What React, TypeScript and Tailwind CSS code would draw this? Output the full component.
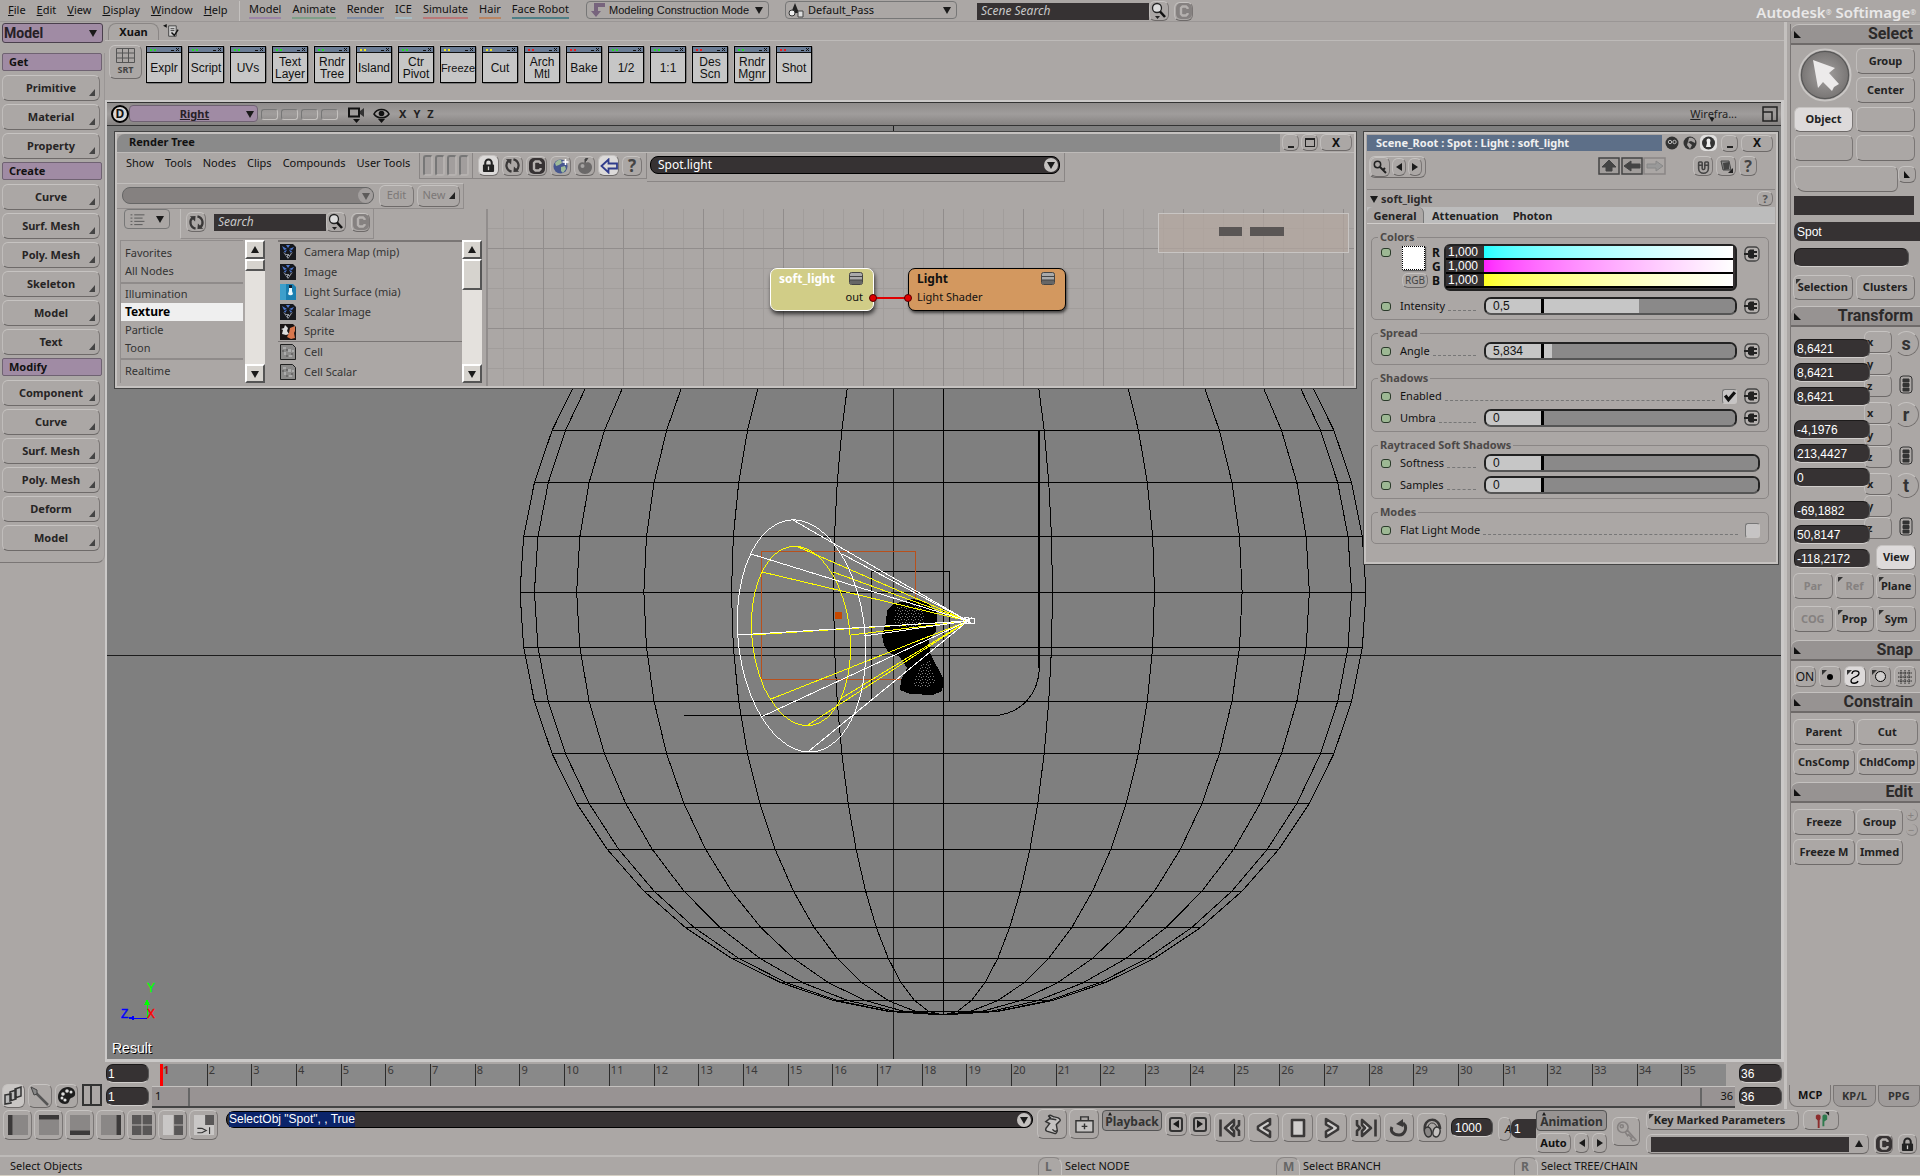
import { useState } from 'react';
import type { ReactNode } from 'react';
import { Magnet } from 'lucide-react';

const BEVEL = 'border border-t-[#c6c3c1] border-l-[#c0bdbb] border-r-[#7a7675] border-b-[#6e6a69] rounded-md';
const FIELD = 'bg-[#363233] text-white font-["Liberation_Sans",sans-serif] text-[12px] leading-[16px] outline-none';
const PILL = 'rounded-[7px] border border-t-[#1c1a1a] border-l-[#1c1a1a] border-r-[#555] border-b-[#d0cdcb]';

const mainMenu = ['File', 'Edit', 'View', 'Display', 'Window', 'Help'];

const moduleMenu = [
  { label: 'Model', line: 'border-[#9c86a6]' },
  { label: 'Animate', line: 'border-[#7f9f88]' },
  { label: 'Render', line: 'border-[#8490a6]' },
  { label: 'ICE', line: 'border-[#a8bcc4]' },
  { label: 'Simulate', line: 'border-[#b97878]' },
  { label: 'Hair', line: 'border-[#b98563]' },
  { label: 'Face Robot', line: 'border-[#4f7f86]' },
];

const leftSections = [
  { title: 'Get', items: ['Primitive', 'Material', 'Property'] },
  { title: 'Create', items: ['Curve', 'Surf. Mesh', 'Poly. Mesh', 'Skeleton', 'Model', 'Text'] },
  { title: 'Modify', items: ['Component', 'Curve', 'Surf. Mesh', 'Poly. Mesh', 'Deform', 'Model'] },
];

const shelf = [
  { label: 'Explr', led: '#1fe01f' },
  { label: 'Script', led: '#1fe01f' },
  { label: 'UVs', led: '#1fe01f' },
  { label: 'Text Layer', led: '#1fe01f' },
  { label: 'Rndr Tree', led: '#1fe01f' },
  { label: 'Island', led: '#f2e61c' },
  { label: 'Ctr Pivot', led: '#1fe01f' },
  { label: 'Freeze', led: '#f2e61c' },
  { label: 'Cut', led: '#f2e61c' },
  { label: 'Arch Mtl', led: '#f01c1c' },
  { label: 'Bake', led: '#f01c1c' },
  { label: '1/2', led: '#1fe01f' },
  { label: '1:1', led: '#1fe01f' },
  { label: 'Des Scn', led: '#f01c1c' },
  { label: 'Rndr Mgnr', led: '#1fe01f' },
  { label: 'Shot', led: '#f01c1c' },
];

const categories = [['Favorites', 'All Nodes'], ['Illumination', 'Texture', 'Particle', 'Toon'], ['Realtime']];

const nodeList = [
  { name: 'Camera Map (mip)', kind: 'map' },
  { name: 'Image', kind: 'map' },
  { name: 'Light Surface (mia)', kind: 'light' },
  { name: 'Scalar Image', kind: 'map' },
  { name: 'Sprite', kind: 'sprite' },
  { name: 'Cell', kind: 'cell' },
  { name: 'Cell Scalar', kind: 'cell' },
];

/* ---------- small shared pieces ---------- */

function Triangle({ dir = 'down', className = '' }: { dir?: 'down' | 'up' | 'left' | 'right'; className?: string }) {
  const d = { down: 'M0 1h8L4 8z', up: 'M0 7h8L4 0z', left: 'M7 0v8L1 4z', right: 'M1 0v8l6-4z' }[dir];
  return (
    <svg viewBox="0 0 8 8" className={`h-2 w-2 shrink-0 fill-[#1a1a1a] ${className}`}>
      <path d={d} />
    </svg>
  );
}

function IconButton({ label, className = '', children }: { label: string; className?: string; children: ReactNode }) {
  return (
    <button aria-label={label} className={`flex shrink-0 items-center justify-center ${BEVEL} ${className}`}>
      {children}
    </button>
  );
}

function CBadge({ dim = false }: { dim?: boolean }) {
  return (
    <svg viewBox="0 0 16 16" className="h-[16px] w-[16px]">
      <rect x="0" y="0" width="16" height="16" rx="5" fill={dim ? '#858180' : '#363233'} />
      <path d="M11.500 6V5l-1.500-1.500H6.500L5 5v6l1.500 1.500H10l1.500-1.500v-1" fill="none" stroke="#b5b1af" strokeWidth="2.400" />
    </svg>
  );
}

function Padlock() {
  return (
    <svg viewBox="0 0 14 16" className="h-[15px] w-[13px]">
      <path d="M3.500 8V5a3.500 3.500 0 017 0v3" fill="none" stroke="#222" strokeWidth="2.200" />
      <rect x="1" y="7" width="12" height="8" rx="1" fill="#222" />
      <path d="M6.300 9h1.400v4H6.300z" fill="#d0cdcb" />
    </svg>
  );
}

function Refresh() {
  return (
    <svg viewBox="0 0 18 18" className="h-[17px] w-[17px]">
      <path d="M8 15.500C2 14 1 7 5 4M10 2.500c6 1.500 7 8.500 3 11.500" fill="none" stroke="#3a3838" strokeWidth="2.400" />
      <path d="M2 2.500l6-.5-.5 6zM16 15.500l-6 .5.500-6z" fill="#3a3838" />
    </svg>
  );
}

function Magnifier() {
  return (
    <svg viewBox="0 0 18 18" className="h-[18px] w-[18px]">
      <circle cx="7" cy="6" r="4.500" fill="#dcdcdc" stroke="#222" strokeWidth="1.300" />
      <path d="M10 9.500l5 5.500" stroke="#111" strokeWidth="2.600" />
      <path d="M5 14h5l-2.500 3z" fill="#222" />
    </svg>
  );
}

function Scrollbar({ thumb }: { thumb: string }) {
  const key = 'flex h-[19px] w-full items-center justify-center border-2 border-t-white border-l-white border-r-[#555] border-b-[#555] bg-[#d6d3ce]';
  return (
    <div className="flex w-[20px] shrink-0 flex-col bg-[#e4e1dd]">
      <button aria-label="Scroll up" className={key}>
        <Triangle dir="up" />
      </button>
      <div className={`w-full border-2 border-t-white border-l-white border-r-[#555] border-b-[#555] bg-[#d6d3ce] ${thumb}`} />
      <div className="flex-1" />
      <button aria-label="Scroll down" className={key}>
        <Triangle />
      </button>
    </div>
  );
}

function SearchBox({ placeholder, width }: { placeholder: string; width: string }) {
  return (
    <div className="flex items-center">
      <input
        type="text"
        aria-label={placeholder}
        placeholder={placeholder}
        className={`h-[17px] bg-[#363233] px-1 text-[12px] text-white italic outline-none placeholder:text-[#c8c8c8] ${width}`}
      />
      <IconButton label="Search" className="h-[20px] w-[20px]">
        <Magnifier />
      </IconButton>
      <IconButton label="Clear" className="ml-[5px] h-[19px] w-[19px]">
        <CBadge dim />
      </IconButton>
    </div>
  );
}

/* ---------- top ---------- */

function MenuBar() {
  return (
    <header className="flex h-[22px] items-start border-b border-[#9a9695] pt-px">
      <nav className="flex w-[239px] gap-[11px] pl-[8px]">
        {mainMenu.map((m) => (
          <button key={m} className="leading-[18px]">
            <u>{m[0]}</u>
            {m.slice(1)}
          </button>
        ))}
      </nav>
      <nav className="flex h-full w-[339px] gap-[11px] border-l border-[#c4c1bf] pl-[9px]">
        {moduleMenu.map((m) => (
          <button key={m.label} className={`h-[18px] border-b-2 leading-[16px] whitespace-nowrap ${m.line}`}>
            {m.label}
          </button>
        ))}
      </nav>
      <div className="relative ml-[8px]">
        <svg viewBox="0 0 14 16" className="pointer-events-none absolute top-px left-[5px] h-[16px] w-[14px]">
          <path d="M14 1H3v8H0l5 6 5-6H7V5h7z" fill="#77647d" />
        </svg>
        <select aria-label="Construction mode" className='h-[18px] w-[183px] appearance-none rounded-sm border border-[#777] pl-[22px] font-["Liberation_Sans",sans-serif]'>
          <option>Modeling Construction Mode</option>
        </select>
        <Triangle className="pointer-events-none absolute top-[5px] right-[6px]" />
      </div>
      <div className="relative ml-[16px]">
        <svg viewBox="0 0 16 16" className="pointer-events-none absolute top-px left-[3px] h-[16px] w-[16px]">
          <path d="M7 1l4 10H3z" fill="#222" />
          <circle cx="4" cy="11" r="3" fill="#eee" stroke="#333" />
          <path d="M10 9h5v6h-5z" fill="#ddd" stroke="#444" />
        </svg>
        <select aria-label="Current pass" className="h-[18px] w-[172px] appearance-none rounded-sm border border-[#777] pl-[22px]">
          <option>Default_Pass</option>
        </select>
        <Triangle className="pointer-events-none absolute top-[5px] right-[6px]" />
      </div>
      <div className="ml-[20px]">
        <SearchBox placeholder="Scene Search" width="w-[172px]" />
      </div>
      <div className="flex-1" />
      <h1 className="pr-[4px] text-[15px] leading-[22px] font-semibold whitespace-nowrap text-[#e9e8e8]">
        Autodesk<sup className="text-[7px]">®</sup> Softimage<sup className="text-[7px]">®</sup>
      </h1>
    </header>
  );
}

function LeftBar() {
  return (
    <aside className="flex w-[105px] shrink-0 flex-col">
      <div className="relative mx-[2px] mt-px">
        <select
          aria-label="Toolbar"
          className='h-[20px] w-full appearance-none rounded-[3px] border border-[#4a3f4d] bg-[#a08ba4] pl-px font-["Roboto",sans-serif] text-[14px] leading-[16px] font-bold text-[#262026]'
        >
          <option>Model</option>
        </select>
        <Triangle className="pointer-events-none absolute top-[6px] right-[6px]" />
      </div>
      <div className="mt-[10px] rounded-br-lg border-r border-b border-r-[#9a9695] border-b-[#7a7675] pb-[8px]">
        {leftSections.map((s) => (
          <section key={s.title}>
            <h2 className="mx-[2px] h-[18px] rounded-[2px] border border-[#6f6272] bg-[#a08ba4] px-[6px] leading-[16px] font-bold">{s.title}</h2>
            <div className="flex flex-col gap-[3px] pt-[4px] pb-[3px] pl-[2px]">
              {s.items.map((item) => (
                <button key={item} className={`relative h-[26px] w-[98px] font-bold text-[#262424] ${BEVEL}`}>
                  {item}
                  <svg viewBox="0 0 6 7" className="absolute right-[4px] bottom-[4px] h-[7px] w-[6px] fill-[#444]">
                    <path d="M6 0v7H0z" />
                  </svg>
                </button>
              ))}
            </div>
          </section>
        ))}
      </div>
      <div className="flex-1" />
      <div className="mb-px flex gap-[3px] pl-[2px]">
        <IconButton label="Layouts" className="h-[24px] w-[23px] bg-[#c9c6c4]">
          <svg viewBox="0 0 20 20" className="h-5 w-5 fill-[#bbb] stroke-[#333]" strokeWidth="1.500">
            <path d="M11 3l6-2v9l-6 2zM6 6l6-2v9l-6 2zM1 9l6-1v9l-6 1z" />
          </svg>
        </IconButton>
        <IconButton label="Brush" className="h-[24px] w-[24px]">
          <svg viewBox="0 0 20 20" className="h-5 w-5">
            <path d="M6 7l12 12" stroke="#555" strokeWidth="2.500" />
            <path d="M1 1l6 3v4l-3 1z" fill="#888" stroke="#444" />
          </svg>
        </IconButton>
        <IconButton label="Palette" className="h-[24px] w-[23px]">
          <svg viewBox="0 0 20 20" className="h-5 w-5">
            <path d="M11 1c5 0 8 4 7 8-1 3-4 2-5 4s-1 5-5 5c-4 0-7-3-7-7C1 5 6 1 11 1z" fill="#1d1d1d" />
            <g fill="#ddd">
              <circle cx="10" cy="5" r="1.800" />
              <circle cx="14" cy="6" r="1.500" />
              <circle cx="6" cy="8" r="1.800" />
              <circle cx="5" cy="12" r="1.500" />
              <circle cx="8" cy="14" r="1.600" />
            </g>
          </svg>
        </IconButton>
        <button aria-label="Split" className="ml-px flex h-[22px] w-[20px] border-2 border-[#333]">
          <span className="h-full w-1/2 border-r-2 border-[#333]" />
        </button>
      </div>
    </aside>
  );
}

function Shelf() {
  return (
    <div>
      <div className="flex h-[19px] items-end border-b border-[#bdbab8] pl-[3px]">
        <button className="h-[17px] w-[51px] rounded-t-lg border border-b-0 border-[#8a8685] leading-[16px] font-bold">Xuan</button>
        <svg viewBox="0 0 18 18" className="ml-[4px] h-[17px] w-[17px]">
          <path d="M0 3l4-2v4z" fill="#111" />
          <path d="M6 3h8v11H6zM8 6h4M8 8h4" fill="#ccc" stroke="#444" />
          <path d="M9 10l3 3 4-6" fill="none" stroke="#111" strokeWidth="1.500" />
        </svg>
      </div>
      <div className="flex h-[59px] items-start pt-[4px] pl-[4px]">
        <IconButton label="SRT" className="mr-[3px] h-[34px] w-[33px] flex-col text-[#444]">
          <svg viewBox="0 0 19 15" className="h-[15px] w-[19px] fill-none stroke-[#555]">
            <path d="M.5.5h18v14H.5zM6.500.5v14M12.500.5v14M.5 5h18M.5 10h18" />
          </svg>
          <span className="text-[9px] leading-[13px] font-bold">SRT</span>
        </IconButton>
        <div className="flex gap-[4px]">
          {shelf.map((s) => (
            <button key={s.label} className="flex h-[39px] w-[38px] flex-col rounded-[4px] border border-t-[#c8c5c3] border-l-[#b5b1af] border-r-[#777] border-b-[#777]">
              <span className="flex h-[37px] w-[36px] flex-col border border-black bg-[#c6c6c6]">
                <svg viewBox="0 0 34 6" className="h-[6px] w-full shrink-0" shapeRendering="crispEdges">
                  <path d="M0 0h34v5H0z" fill="#6b7d96" />
                  <path d="M0 5h34v1H0z" fill="#111" />
                  <path d="M3 2h2v2H3zM7 2h2v2H7z" fill={s.led} />
                  <path d="M24 3.500h3M29 1l3 3M32 1l-3 3" stroke="#111" />
                </svg>
                <span
                  className={`flex flex-1 items-center justify-center text-center font-["Liberation_Sans",sans-serif] leading-[12px] ${s.label === 'Freeze' ? 'text-[11px]' : 'text-[12px]'}`}
                >
                  {s.label}
                </span>
              </span>
            </button>
          ))}
        </div>
      </div>
    </div>
  );
}

/* ---------- viewport drawing ---------- */

const CX = 943;
const CY = 592;
const R = 423;
const rad = (deg: number) => (deg * Math.PI) / 180;
const latitudes = Array.from({ length: 25 }, (_, i) => -90 + i * 7.5);
const longitudes = Array.from({ length: 13 }, (_, i) => -90 + i * 15);

const outerSpokes = [[793, 520], [751, 554], [737, 635], [761, 717], [809, 751], [852, 716], [864, 636], [842, 554]];
const innerSpokes = [[796, 546], [762, 572], [751, 635], [771, 699], [808, 725], [840, 699], [851, 635], [833, 572]];

function Wireframe() {
  const bands = latitudes.map((a) => {
    const y = CY + R * Math.sin(rad(a));
    const w = R * Math.cos(rad(a));
    return `M${CX - w} ${y}H${CX + w}`;
  });
  const meridians = longitudes.map(
    (l) =>
      'M' +
      latitudes.map((a) => `${CX + R * Math.cos(rad(a)) * Math.sin(rad(l))} ${CY + R * Math.sin(rad(a))}`).join('L'),
  );
  return (
    <svg viewBox="107 126 1674 933" className="absolute inset-0 h-full w-full" shapeRendering="crispEdges" fill="none">
      <defs>
        <pattern id="mesh" width="7" height="6" patternUnits="userSpaceOnUse">
          <path d="M1 1h1v1h-1zM3 2h1v1h-1zM5 1h1v1h-1zM2 4h1v1h-1zM6 4h1v1h-1zM4 5h1v1h-1z" fill="#7f7f7f" />
        </pattern>
      </defs>
      <path d="M893.500 126V1059M107 655.500H1781" stroke="#1c1c1c" />
      <path d={bands.join('') + meridians.join('')} stroke="#000" />
      <path d="M871.500 702V571.500H949.500V702" stroke="#000" />
      <path d="M761.500 551.500h154v128h-154z" stroke="#b8501c" />
      <path d="M1039 431V668" stroke="#000" strokeWidth="2" />
      <path d="M1039.500 668C1038 695 1022 712 997 715.500H684" stroke="#000" />
      <path
        d="M893 604l20-5 15 4 9 10-1 18-7 9 1 13 14 27-2 11-9 4-23-1-10-4 1-10 6-12-8-12-10-3-5-8-2-10 4-12 1-13z"
        fill="#000"
      />
      <path d="M895 608l18-4 13 5-2 14-14 5-16-2zM922 662l8-1 6 22-14 6-10-3z" fill="url(#mesh)" />
      <path d="M835 612h7v7h-7z" fill="#c84800" />
      <g stroke="#ff0">
        <ellipse cx="801" cy="636" rx="49" ry="90" transform="rotate(-5.700 801 636)" />
        <path d={innerSpokes.map(([x, y]) => `M${x} ${y}L968 621`).join('')} />
      </g>
      <g stroke="#fff">
        <ellipse cx="801.500" cy="636" rx="63.500" ry="116.500" transform="rotate(-5.700 801 636)" />
        <path d={outerSpokes.map(([x, y]) => `M${x} ${y}L968 621`).join('')} />
        <circle cx="967" cy="620.500" r="3" />
        <path d="M964 617l8 7M964 624l8-7M968 618h6v5h-6z" />
      </g>
      <path d="M147.500 1018V1001" stroke="#0f0" />
      <path d="M144 1005h6l-3-6z" fill="#0f0" />
      <path d="M147 1018.500H130" stroke="#00f" />
      <path d="M134 1015.500v5l-6-2.500z" fill="#00f" />
      <g className='font-["Liberation_Sans",sans-serif] text-[12px]' strokeWidth=".4">
        <text x="147" y="992" fill="#0f0" stroke="#0f0">Y</text>
        <text x="147" y="1018" fill="#f00" stroke="#f00">X</text>
        <text x="121" y="1018" fill="#00f" stroke="#00f">Z</text>
      </g>
    </svg>
  );
}

/* ---------- render tree ---------- */

function WindowKeys({ maximize = false }: { maximize?: boolean }) {
  return (
    <>
      <IconButton label="Minimize" className="h-[17px] w-[17px]">
        <span className="mt-[8px] h-[2px] w-[6px] bg-[#222]" />
      </IconButton>
      {maximize && (
        <IconButton label="Maximize" className="h-[17px] w-[17px]">
          <span className="h-[9px] w-[10px] border border-t-2 border-[#222]" />
        </IconButton>
      )}
      <button aria-label="Close" className={`h-[17px] w-[32px] text-[12px] leading-[14px] font-bold ${BEVEL}`}>
        X
      </button>
    </>
  );
}

function NodeIcon({ kind }: { kind: string }) {
  return (
    <svg viewBox="0 0 16 16" className="h-[16px] w-[16px] shrink-0">
      {kind === 'map' && (
        <>
          <path d="M0 0h13l3 3v13H0z" fill="#16181d" />
          <path d="M2 2l5 3-3 1zM14 3l-5 2 3 1zM6 1l2 3 2-3zM4 7l3-1-2 3zM12 7L9 6l2 3z" fill="#4f78cf" />
          <path d="M3 8l5 7 5-7-3 2H6z" fill="#8d929b" />
          <path d="M6 11h1v1H6zM8 12h1v1H8zM9 10h1v1H9z" fill="#16181d" />
        </>
      )}
      {kind === 'light' && (
        <>
          <path d="M0 0h13l3 3v13H0z" fill="#1b7fb0" />
          <path d="M0 0h6v16H0z" fill="#3d9fcb" />
          <path d="M9 1h3v3H9z" fill="#123" />
          <path d="M9 4h3v3l1 3a3 3 0 01-5 0l1-3z" fill="#eafaff" />
        </>
      )}
      {kind === 'sprite' && (
        <>
          <path d="M0 0h13l3 3v13H0z" fill="#1a1515" />
          <path d="M5 1l3 3-1 3 2 3-3 1-4-1 1-4-2-1 3-1z" fill="#ddd" />
          <path d="M10 4l5-2v5l-1 2 1 5-4 1-4-2 2-4z" fill="#d9774d" />
        </>
      )}
      {kind === 'cell' && (
        <>
          <path d="M.5.5h12l3 3v12H.5z" fill="#8b8a89" stroke="#222" />
          <path d="M3 3h3v2H3zM8 5h3v3H8zM4 8h2v3H4zM9 11h3v2H9zM12 6h2v2h-2z" fill="#aaa" />
          <path d="M6 5h2v2H6zM6 11h2v2H6zM2 6h2v2H2zM11 9h2v2h-2z" fill="#6c6b6b" />
        </>
      )}
    </svg>
  );
}

function NodeGlyph() {
  return (
    <svg viewBox="0 0 14 13" className="h-[13px] w-[14px]">
      <rect x=".5" y=".5" width="13" height="12" rx="2" fill="#a9a9a9" stroke="#444" />
      <path d="M1 8h12v3l-1 1H2l-1-1z" fill="#666" />
      <path d="M1 4.500h12M1 8h12" stroke="#444" />
    </svg>
  );
}

function Graph() {
  return (
    <div className="relative min-w-0 flex-1 overflow-hidden">
      <svg className="absolute inset-0 h-full w-full">
        <defs>
          <pattern id="minor" x="15" y="19" width="20" height="20" patternUnits="userSpaceOnUse">
            <path d="M.5 0v20M0 .5h20" stroke="#a19d9b" />
          </pattern>
          <pattern id="major" x="55" y="39" width="80" height="80" patternUnits="userSpaceOnUse">
            <path d="M.5 0v80M0 .5h80" stroke="#918d8c" />
          </pattern>
        </defs>
        <rect width="100%" height="100%" fill="url(#minor)" />
        <rect width="100%" height="100%" fill="url(#major)" />
      </svg>
      <div className="absolute top-[59px] left-[282px] h-[43px] w-[104px] rounded-[7px] border border-white bg-[#d1cd87] pt-[3px] shadow-[1px_3px_4px_rgba(0,0,0,0.7)]">
        <div className="flex items-start justify-between pr-[10px] pl-[8px] text-[12px] leading-[14px] font-bold text-white">
          soft_light
          <NodeGlyph />
        </div>
        <div className="pr-[10px] text-right leading-[22px]">out</div>
      </div>
      <div className="absolute top-[59px] left-[420px] h-[43px] w-[158px] rounded-[7px] border border-black bg-[#d3985f] pt-[3px] shadow-[1px_2px_3px_rgba(0,0,0,0.6)]">
        <div className="flex items-start justify-between pr-[10px] pl-[8px] text-[12px] leading-[14px] font-bold">
          Light
          <NodeGlyph />
        </div>
        <div className="pl-[8px] leading-[22px]">Light Shader</div>
      </div>
      <svg viewBox="0 0 44 10" className="absolute top-[84px] left-[380px] h-[10px] w-[44px]">
        <path d="M5 5h35" stroke="#e00000" strokeWidth="2" />
        <circle cx="5" cy="5" r="3.500" fill="#e00000" stroke="#500" />
        <circle cx="40" cy="5" r="3.500" fill="#e00000" stroke="#500" />
      </svg>
      <div className="absolute top-[4px] right-[5px] flex h-[40px] w-[191px] items-center gap-[8px] border border-[#c8c5c3] bg-[#b3a69f]/70 pb-[3px] pl-[60px]">
        <span className="h-[9px] w-[23px] bg-[#5a5655]" />
        <span className="h-[9px] w-[34px] bg-[#5a5655]" />
      </div>
    </div>
  );
}

function RenderTree() {
  const [category, setCategory] = useState('Texture');
  return (
    <section className="absolute top-[5px] left-[7px] flex h-[258px] w-[1243px] flex-col border border-[#444] bg-[#aba7a5] p-[2px] shadow-[inset_0_0_0_2px_#c5c2c0]">
      <div className="flex h-[18px] items-start gap-[2px] pr-[2px]">
        <h2 className="h-full flex-1 rounded-tl-lg bg-[#8a8a8a] pl-[12px] leading-[15px] font-bold">Render Tree</h2>
        <WindowKeys maximize />
      </div>
      <div className="flex h-[31px] items-start border-t border-[#bdbab8]">
        <nav className="flex h-[26px] w-[302px] items-start gap-[11px] pt-px pl-[9px] leading-[18px]">
          {['Show', 'Tools', 'Nodes', 'Clips', 'Compounds', 'User Tools'].map((m) => (
            <button key={m} className="whitespace-nowrap">{m}</button>
          ))}
        </nav>
        <div className="flex h-[26px] w-[54px] items-center gap-[2px] border-r border-b border-l border-[#8a8685] pl-[3px]">
          {[0, 1, 2, 3].map((i) => (
            <span key={i} className="h-[21px] w-[10px] rounded-[3px] border-2 border-t-[#777] border-l-[#777] border-r-[#b5b1af] border-b-[#b5b1af] bg-[#a29e9d]" />
          ))}
        </div>
        <div className="flex h-[26px] w-[174px] items-center gap-[3px] border-r border-b border-[#8a8685] pl-[5px]">
          <IconButton label="Lock" className="h-[21px] w-[21px] bg-[#dcdad9]">
            <Padlock />
          </IconButton>
          <IconButton label="Refresh" className="h-[20px] w-[21px]">
            <Refresh />
          </IconButton>
          <IconButton label="Clear" className="h-[20px] w-[21px]">
            <CBadge />
          </IconButton>
          <IconButton label="World" className="h-[20px] w-[21px]">
            <svg viewBox="0 0 16 16" className="h-[16px] w-[16px]">
              <circle cx="7.500" cy="8.500" r="7" fill="#46578f" />
              <path d="M2 5c2-3 5-4 6-3l1 3-3 2-3 1zM8 9l4-1 1 3-3 4-2-2z" fill="#9dba97" />
              <path d="M12.500 1v6M9.500 4h6" stroke="#fff" strokeWidth="1.500" />
            </svg>
          </IconButton>
          <IconButton label="Apple" className="h-[20px] w-[21px]">
            <svg viewBox="0 0 16 16" className="h-[16px] w-[16px]">
              <path d="M8 5c3-2 7 0 7 4s-3 7-7 7-7-3-7-7 4-6 7-4z" fill="#6b6969" />
              <circle cx="5.500" cy="8" r="2" fill="#a5a3a2" />
              <path d="M8 5V1l3-1-2 3" stroke="#444" fill="#444" />
            </svg>
          </IconButton>
          <IconButton label="Back" className="h-[21px] w-[21px] bg-[#dcdad9]">
            <svg viewBox="0 0 18 16" className="h-[16px] w-[18px] fill-[#dcdad9] stroke-[#303c8c]" strokeWidth="1.800">
              <path d="M1.500 8l7-6.500v4h8.500v5H8.500v4z" />
            </svg>
          </IconButton>
          <IconButton label="Help" className="h-[20px] w-[20px] text-[17px] leading-none font-bold text-[#444]">
            ?
          </IconButton>
        </div>
        <div className="relative h-[29px] w-[418px] border-r border-b border-[#8a8685] pt-[3px] pl-[3px]">
          <input type="text" aria-label="Node" defaultValue="Spot.light" className="h-[18px] w-[410px] rounded-[8px] border border-black bg-[#363233] px-[7px] text-[12px] text-white outline-none" />
          <button aria-label="Recent nodes" className="absolute top-[5px] right-[6px] flex h-[14px] w-[14px] items-center justify-center rounded-full bg-[#c4c1bf]">
            <Triangle />
          </button>
        </div>
      </div>
      <div className="flex h-[26px] items-start">
        <div className="flex h-[26px] w-[347px] items-center border border-l-0 border-[#918d8c] border-t-[#c0bdbb] pb-px pl-[5px] text-[#7c7877]">
          <div className="flex h-[17px] w-[252px] justify-end rounded-[8px] border border-[#666] bg-[#858180]">
            <span className="flex h-[15px] w-[15px] items-center justify-center rounded-full bg-[#a29e9d]">
              <Triangle className="opacity-50" />
            </span>
          </div>
          <button disabled className={`ml-[5px] h-[22px] w-[35px] ${BEVEL}`}>Edit</button>
          <button disabled className={`ml-[3px] flex h-[22px] w-[43px] items-center justify-center gap-[3px] ${BEVEL}`}>
            New
            <svg viewBox="0 0 6 7" className="h-[7px] w-[6px] fill-[#222]">
              <path d="M6 0v7H0z" />
            </svg>
          </button>
        </div>
      </div>
      <div className="flex min-h-0 flex-1">
        <div className="flex w-[371px] shrink-0 flex-col border-r-2 border-r-[#918d8c]">
          <div className="flex h-[31px] items-start">
            <button aria-label="List style" className="ml-[7px] flex h-[20px] w-[46px] items-center justify-between rounded-sm border border-[#777] px-[5px]">
              <svg viewBox="0 0 15 14" className="h-[13px] w-[15px] stroke-[#555]">
                <path d="M0 2h2M4 2h11M0 5.500h2M4 5.500h9M0 9h2M4 9h11M0 12.500h2M4 12.500h9" />
              </svg>
              <Triangle />
            </button>
            <div className="ml-[10px] flex h-[30px] w-[194px] items-start border-r border-b border-l border-[#918d8c] border-l-[#c0bdbb] pt-[3px] pl-[5px]">
              <IconButton label="Refresh list" className="mr-[8px] h-[20px] w-[20px]">
                <Refresh />
              </IconButton>
              <SearchBox placeholder="Search" width="w-[112px]" />
            </div>
          </div>
          <div className="flex h-[143px] gap-[13px] overflow-hidden pl-[3px]">
            <div className="flex w-[145px] gap-[2px]">
              <div className="min-w-0 flex-1 border-t border-l border-[#918d8c] text-[#333]">
                {categories.map((group, i) => (
                  <div key={i} className={`py-px ${i > 0 ? 'border-t-2 border-[#8f8b8a]' : ''}`}>
                    {group.map((c) => (
                      <button
                        key={c}
                        onClick={() => setCategory(c)}
                        className={`block h-[18px] w-full px-[4px] text-left leading-[18px] ${c === category ? 'bg-[#efefef] text-[12px] font-bold text-black' : ''} ${c === 'Favorites' ? 'mt-[2px]' : ''} ${c === 'Realtime' ? 'mt-px' : ''} ${c === 'All Nodes' ? 'mb-px' : ''}`}
                      >
                        {c}
                      </button>
                    ))}
                  </div>
                ))}
              </div>
              <Scrollbar thumb="h-[12px]" />
            </div>
            <div className="flex w-[204px]">
              <ul className="flex-1 border-t-2 border-[#7a7675] text-[#333]">
                {nodeList.map((n) => (
                  <li key={n.name} className={`flex h-[20px] items-center gap-[8px] pl-[2px] ${n.name === 'Sprite' ? 'border-b border-[#7a7675]' : ''}`}>
                    <NodeIcon kind={n.kind} />
                    {n.name}
                  </li>
                ))}
              </ul>
              <Scrollbar thumb="h-[31px]" />
            </div>
          </div>
        </div>
        <Graph />
      </div>
    </section>
  );
}

/* ---------- property page ---------- */

function Plug() {
  return (
    <button aria-label="Connect" className="ml-[7px] h-[16px] w-[16px] shrink-0">
      <svg viewBox="0 0 16 16" className="h-full w-full">
        <rect x="1" y="1" width="14" height="14" rx="4" fill="#b5b1af" stroke="#444" strokeWidth="1.300" />
        <path d="M0 7h4V5l2-1.500h4V5h3v2h-3v2h3v2h-3v1.500H6L4 11V9H0z" fill="#222" />
      </svg>
    </button>
  );
}

function KeyDot() {
  return <span className="h-[9px] w-[10px] shrink-0 rounded-[3px] border border-[#2a3a2a] bg-[#9db894]" />;
}

function ParamRow({ label, value, fill = 0, plug = true }: { label: string; value: string; fill?: number; plug?: boolean }) {
  const [amount, setAmount] = useState(fill);
  const id = label.toLowerCase();
  return (
    <div className="flex h-[22px] items-center pr-[8px] pl-[9px]">
      <KeyDot />
      <div className="ml-[9px] flex w-[84px] items-end pr-[8px]">
        <label htmlFor={id} className="leading-[18px]">{label}</label>
        <span className="mb-[4px] ml-[3px] flex-1 border-b border-dashed border-[#777]" />
      </div>
      <div className="flex h-[18px] min-w-0 flex-1 overflow-hidden rounded-[7px] border-2 border-[#222] border-b-[#555] bg-[#8a8989]">
        <input
          id={id}
          type="text"
          defaultValue={value}
          className='w-[58px] shrink-0 border-r-[3px] border-black bg-[#c6c6c6] pl-[7px] font-["Liberation_Sans",sans-serif] text-[12px] outline-none'
        />
        <input
          type="range"
          aria-label={`${label} slider`}
          min={0}
          max={100}
          value={amount}
          onChange={(e) => setAmount(Number(e.target.value))}
          className="h-full min-w-0 flex-1 appearance-none [&::-webkit-slider-thumb]:w-0 [&::-webkit-slider-thumb]:appearance-none"
          style={{ background: `linear-gradient(90deg, #c6c6c6 ${amount}%, #8a8989 ${amount}%)` }}
        />
      </div>
      {plug && <Plug />}
    </div>
  );
}

function CheckRow({ label, checked, plug = false }: { label: string; checked: boolean; plug?: boolean }) {
  const id = label.toLowerCase().replace(/ /g, '-');
  return (
    <div className="flex h-[22px] items-center pr-[8px] pl-[9px]">
      <KeyDot />
      <label htmlFor={id} className="ml-[9px] leading-[18px]">{label}</label>
      <span className="mt-[8px] mr-[7px] ml-[3px] flex-1 border-b border-dashed border-[#777]" />
      <span className="relative h-[15px] w-[15px]">
        <input id={id} type="checkbox" defaultChecked={checked} className="peer block h-full w-full appearance-none rounded-[3px] border border-[#c8c5c3] border-t-[#777] border-l-[#777] bg-[#c6c4c4]" />
        <svg viewBox="0 0 14 14" className="pointer-events-none absolute inset-0 hidden peer-checked:block">
          <path d="M3 6l3 4 6-7" fill="none" stroke="#111" strokeWidth="3" />
        </svg>
      </span>
      {plug && <Plug />}
    </div>
  );
}

function Group({ title, children }: { title: string; children: ReactNode }) {
  return (
    <fieldset className="min-w-0 rounded-[5px] border border-[#8a8685] pb-[2px]">
      <legend className="ml-[6px] px-[2px] leading-[14px] font-bold text-[#4c4948]">{title}</legend>
      {children}
    </fieldset>
  );
}

const channels = [
  { name: 'R', bar: 'from-[#20ffff]' },
  { name: 'G', bar: 'from-[#ff20ff]' },
  { name: 'B', bar: 'from-[#ffff20]' },
];

function PropertyPage() {
  return (
    <section className="absolute top-[5px] right-[2px] w-[416px] border border-[#444] bg-[#aba7a5] p-[3px] pb-[20px] shadow-[inset_0_0_0_2px_#c5c2c0]">
      <div className="flex h-[16px] items-center bg-[#5d6f88]">
        <h2 className="min-w-0 flex-1 pl-[9px] leading-[14px] font-bold text-[#f0f0f0]">Scene_Root : Spot : Light : soft_light</h2>
        <div className="flex h-full items-center gap-[3px] bg-[#aba7a5] px-[2px]">
          <svg viewBox="0 0 54 16" className="h-[16px] w-[54px]">
            <circle cx="8" cy="8" r="6.500" fill="#333" />
            <circle cx="6" cy="7" r="1.700" fill="#333" stroke="#bbb" />
            <circle cx="10.500" cy="7" r="1.700" fill="#333" stroke="#bbb" />
            <circle cx="26" cy="8" r="6.500" fill="#333" />
            <path d="M25 3c4-1 7 2 6 5l-4-2-3 1 4 3-2 4-3-4z" fill="#a5a1a0" />
            <rect x="36" y="0" width="17" height="16" rx="5" fill="#e0dfde" />
            <circle cx="44.500" cy="8" r="6.500" fill="#333" />
            <path d="M42.500 5.500a2 2 0 114 0L46 8l1 4h-5l1-4z" fill="#eee" />
          </svg>
          <WindowKeys />
        </div>
      </div>
      <div className="flex h-[39px] items-start border-b border-[#8a8685] pt-[5px] pl-[2px]">
        <div className={`flex h-[22px] w-[57px] items-center gap-[2px] ${BEVEL}`}>
          <IconButton label="Key" className="h-[20px] w-[20px] border-[#444]">
            <svg viewBox="0 0 14 14" className="h-[14px] w-[14px] fill-none stroke-[#222]" strokeWidth="1.500">
              <circle cx="4.500" cy="4.500" r="3.200" />
              <path d="M7 7l6 6M10 10l2-2" strokeWidth="2" />
            </svg>
          </IconButton>
          <IconButton label="Previous key" className="h-[18px] w-[14px]">
            <Triangle dir="left" />
          </IconButton>
          <IconButton label="Next key" className="h-[18px] w-[14px]">
            <Triangle dir="right" />
          </IconButton>
        </div>
        <svg viewBox="0 0 68 18" className="mt-px ml-[172px] h-[18px] w-[68px] shrink-0" stroke="#444">
          <path d="M1 1h20v16H1zM24 1h20v16H24z" fill="#a19d9b" strokeWidth="1.500" />
          <path d="M46 1h21v16H46z" fill="#aba7a5" stroke="#8a8685" strokeWidth="1.500" />
          <path d="M11 3l7 7h-4v4H8v-4H4zM26 9l7-5v3h9v4h-9v3z" fill="#444" />
          <path d="M65 9l-7-5v3h-9v4h9v3z" fill="#999" stroke="#888" />
        </svg>
        <div className="flex-1" />
        <IconButton label="Magnet" className="mr-[3px] h-[20px] w-[20px]">
          <Magnet className="h-[15px] w-[15px] rotate-[135deg] text-[#444]" strokeWidth={2.5} />
        </IconButton>
        <IconButton label="Load preset" className="mr-[3px] h-[20px] w-[20px]">
          <svg viewBox="0 0 14 14" className="h-[14px] w-[14px]">
            <path d="M2 2h8l2 9H4z" fill="#888" stroke="#444" />
            <path d="M4 4l6-1v7l-5 1z" fill="#444" />
            <path d="M14 9v5H9z" fill="#222" />
          </svg>
        </IconButton>
        <IconButton label="Help" className="mr-[18px] h-[20px] w-[18px] text-[16px] leading-none font-bold text-[#444]">
          ?
        </IconButton>
      </div>
      <div className="flex h-[17px] items-center gap-[3px] pr-[2px] pl-[3px]">
        <Triangle />
        <h3 className="flex-1 leading-[14px] font-bold text-[#2c2a2a]">soft_light</h3>
        <IconButton label="Help on soft_light" className="h-[15px] w-[16px] leading-none font-bold text-[#555]">
          ?
        </IconButton>
      </div>
      <div className="flex h-[17px] items-stretch border-b border-[#d0cdcb] bg-[#bcbcbc] font-bold text-[#222]">
        <button className="w-[57px] rounded-t-md border-r border-[#777] bg-[#aba7a5] leading-[18px]">General</button>
        <button className="ml-[8px] leading-[18px]">Attenuation</button>
        <button className="ml-[14px] leading-[18px]">Photon</button>
      </div>
      <div className="flex flex-col gap-[6px] pt-[6px] pr-[6px] pl-[4px]">
        <Group title="Colors">
          <div className="flex h-[51px] items-start pr-[8px] pl-[9px]">
            <span className="mt-[4px] flex">
              <KeyDot />
            </span>
            <div className="ml-[11px] flex w-[26px] flex-col gap-[3px]">
              <button aria-label="Pick color" className="mt-[2px] h-[24px] w-[23px] border border-dotted border-black bg-white shadow-[1px_1px_1px_#555]" />
              <button className={`h-[15px] text-[10px] leading-[13px] text-[#444] ${BEVEL}`}>RGB</button>
            </div>
            <div className="ml-[4px] w-[12px] font-bold">
              {channels.map((c) => (
                <div key={c.name} className="h-[14px] text-[12px] leading-[17px]">{c.name}</div>
              ))}
            </div>
            <div className="flex min-w-0 flex-1 flex-col rounded-[6px] border-2 border-[#222] bg-[#363233] pr-[2px] pb-px">
              {channels.map((c) => (
                <div key={c.name} className="flex h-[14px] border-b-2 border-black">
                  <input type="text" aria-label={`${c.name} value`} defaultValue="1,000" className='w-[38px] shrink-0 bg-[#363233] pl-[2px] font-["Liberation_Sans",sans-serif] text-[12px] leading-[12px] text-white outline-none' />
                  <input
                    type="range"
                    aria-label={c.name}
                    defaultValue={100}
                    className={`h-full min-w-0 flex-1 appearance-none bg-linear-to-r to-white [&::-webkit-slider-thumb]:w-0 [&::-webkit-slider-thumb]:appearance-none ${c.bar}`}
                  />
                </div>
              ))}
            </div>
            <span className="mt-[2px] flex">
              <Plug />
            </span>
          </div>
          <ParamRow label="Intensity" value="0,5" fill={50} />
        </Group>
        <Group title="Spread">
          <ParamRow label="Angle" value="5,834" fill={4} />
        </Group>
        <Group title="Shadows">
          <CheckRow label="Enabled" checked plug />
          <ParamRow label="Umbra" value="0" />
        </Group>
        <Group title="Raytraced Soft Shadows">
          <ParamRow label="Softness" value="0" plug={false} />
          <ParamRow label="Samples" value="0" plug={false} />
        </Group>
        <Group title="Modes">
          <CheckRow label="Flat Light Mode" checked={false} />
        </Group>
      </div>
    </section>
  );
}

function Viewport() {
  return (
    <section className="flex min-h-0 flex-1 flex-col border-t-2 border-r-3 border-b-3 border-l-2 border-[#cbc9c8]">
      <div className="flex h-[24px] items-center border-y border-[#333] bg-linear-to-b from-[#8f8c8b] via-[#a09d9c] to-[#858281] pl-[4px]">
        <span className="flex h-[18px] w-[18px] shrink-0 items-center justify-center rounded-full border-2 border-black bg-[#d8d6d5] text-[12px] leading-none font-bold">D</span>
        <div className="relative">
          <select aria-label="View" className="h-[17px] w-[129px] appearance-none rounded-sm border border-[#6f6272] bg-[#a08ba4] pl-[2px] text-center font-bold text-[#262026] underline">
            <option>Right</option>
          </select>
          <Triangle className="pointer-events-none absolute top-[5px] right-[4px]" />
        </div>
        <div className="flex gap-[3px] pl-[3px]">
          {[0, 1, 2, 3].map((i) => (
            <button key={i} aria-label={`Memo cam ${i + 1}`} className="h-[11px] w-[17px] rounded-[3px] border border-t-[#777] border-l-[#777] border-r-[#c4c1bf] border-b-[#c4c1bf]" />
          ))}
        </div>
        <svg viewBox="0 0 42 16" className="mt-px ml-[10px] h-[16px] w-[42px]">
          <path d="M1 1.500h10v8H1z" fill="none" stroke="#111" strokeWidth="2" />
          <path d="M12 4l4-3v9l-4-3z" fill="#333" />
          <path d="M5 12h7l-3.500 4zM30 12h7l-3.500 4z" fill="#111" />
          <path d="M26 7c3-6 12-6 15 0-3 5-12 5-15 0z" fill="none" stroke="#111" strokeWidth="1.600" />
          <circle cx="33.500" cy="6.500" r="2.800" fill="#111" />
        </svg>
        <div className="flex gap-[7px] pl-[9px] font-bold text-[#222]">
          <button>X</button>
          <button>Y</button>
          <button>Z</button>
        </div>
        <div className="flex-1" />
        <button className="relative text-[#222]">
          <u>W</u>irefra...
          <Triangle className="absolute top-[11px] left-[18px] h-[5px]" />
        </button>
        <svg viewBox="0 0 16 16" className="mr-[3px] ml-[25px] h-[16px] w-[16px] fill-none stroke-[#222]">
          <path d="M1 1h14v14H1zM1 6h9v9" strokeWidth="1.500" />
        </svg>
      </div>
      <div className="relative min-h-[560px] flex-1 overflow-hidden bg-[#7f7f7f]">
        <Wireframe />
        <p className='absolute bottom-[2px] left-[5px] font-["Liberation_Sans",sans-serif] text-[14px] leading-[18px] text-white [text-shadow:1px_1px_0_#000]'>Result</p>
        <RenderTree />
        <PropertyPage />
      </div>
    </section>
  );
}

function Timeline() {
  const frames = Array.from({ length: 35 }, (_, i) => i + 1);
  const field = `h-[19px] w-[43px] px-px ${FIELD} ${PILL}`;
  return (
    <div className="flex h-[47px] pt-[2px] pl-px">
      <div className="flex w-[46px] shrink-0 flex-col gap-[4px]">
        <input type="text" aria-label="Start frame" defaultValue="1" className={field} />
        <input type="text" aria-label="Range start" defaultValue="1" className={field} />
      </div>
      <div className="min-w-0 flex-1">
        <div className="h-[22px] pr-[9px] pl-[8px]">
          <div className="grid h-full grid-cols-[repeat(35,minmax(0,1fr))] bg-[#898989] pl-[2px] text-[#3a3838]">
            {frames.map((f) => (
              <span key={f} className={`leading-[12px] ${f === 1 ? '-ml-[2px] border-l-3 border-[#f00] font-bold text-[#a01010]' : 'border-l border-[#2c2c2c] pl-px'}`}>
                {f}
              </span>
            ))}
          </div>
        </div>
        <div className="flex h-[22px] items-center justify-between border-t border-b-2 border-t-[#c4c1bf] border-b-[#444] bg-[#989393]">
          <span className="flex h-[18px] w-[38px] items-center border-r-2 border-[#666] pl-[3px]">1</span>
          <span className="flex h-[18px] w-[35px] items-center justify-end border-l-2 border-[#666] pr-[2px]">36</span>
        </div>
      </div>
      <div className="flex w-[49px] shrink-0 flex-col gap-[4px] pl-[4px]">
        <input type="text" aria-label="End frame" defaultValue="36" className={field} />
        <input type="text" aria-label="Range end" defaultValue="36" className={field} />
      </div>
    </div>
  );
}

/* ---------- main command panel ---------- */

function PanelHeader({ children }: { children: ReactNode }) {
  return (
    <div className="flex h-[21px] items-center justify-between rounded-tl-lg border-t border-b-2 border-t-[#c4c1bf] border-b-[#6e6a69] bg-[#979392] pr-[7px] pl-[3px]">
      <svg viewBox="0 0 7 7" className="h-[7px] w-[7px] fill-[#111]">
        <path d="M0 0v7h7z" />
      </svg>
      <h2 className='font-["Roboto",sans-serif] text-[16px] leading-[18px] font-bold text-[#2c2a2a]'>{children}</h2>
    </div>
  );
}

function PanelButton({ children, className = '', lit = false, dim = false, corner = false }: { children?: ReactNode; className?: string; lit?: boolean; dim?: boolean; corner?: boolean }) {
  return (
    <button className={`relative font-bold whitespace-nowrap ${BEVEL} ${lit ? 'bg-[#dddada]' : ''} ${dim ? 'text-[#858180]' : 'text-[#222]'} ${className}`}>
      {corner && (
        <svg viewBox="0 0 5 5" className="absolute top-[3px] left-[2px] h-[5px] w-[5px] fill-[#333]">
          <path d="M0 0h5L0 5z" />
        </svg>
      )}
      {children}
    </button>
  );
}

const transformValues = [
  ['8,6421', '8,6421', '8,6421'],
  ['-4,1976', '213,4427', '0'],
  ['-69,1882', '50,8147', '-118,2172'],
];

function CommandPanel() {
  return (
    <aside className="flex w-[136px] shrink-0 flex-col border-l-3 border-[#c4c1bf]">
      <div className="mt-[2px] ml-[3px] border-l border-[#7a7675]">
        <PanelHeader>Select</PanelHeader>
        <div className="flex gap-[4px] pt-[3px] pl-[7px]">
          <button aria-label="Select" className="h-[54px] w-[54px] shrink-0">
            <svg viewBox="0 0 54 54" className="h-full w-full">
              <defs>
                <radialGradient id="dial">
                  <stop offset="0" stopColor="#a5a2a1" />
                  <stop offset="1" stopColor="#757271" />
                </radialGradient>
              </defs>
              <circle cx="27" cy="27" r="25.500" fill="url(#dial)" stroke="#c9c6c4" strokeWidth="2" />
              <circle cx="27" cy="27" r="23.500" fill="none" stroke="#555" />
              <path d="M15 12l22 8-6 5 10 11-5 3-2 4-9-9-5 6z" fill="#eceaea" />
            </svg>
          </button>
          <div className="flex flex-1 flex-col gap-[3px] pr-[5px]">
            <PanelButton className="h-[26px]">Group</PanelButton>
            <PanelButton className="h-[26px]">Center</PanelButton>
          </div>
        </div>
        <div className="grid grid-cols-2 gap-x-[3px] gap-y-[3px] pt-[4px] pr-[5px] pl-[3px]">
          <PanelButton lit className="h-[25px]">Object</PanelButton>
          <PanelButton className="h-[25px]" />
          <PanelButton className="h-[26px]" />
          <PanelButton className="h-[26px]" />
        </div>
        <div className="flex items-start pt-[5px] pr-[4px] pl-[3px]">
          <PanelButton className="h-[26px] flex-1 rounded-bl-xl" />
          <IconButton label="More filters" className="h-[17px] w-[18px] rounded-full">
            <svg viewBox="0 0 6 7" className="h-[7px] w-[6px] fill-[#111]">
              <path d="M0 0v7h6z" />
            </svg>
          </IconButton>
        </div>
        <div className="flex flex-col gap-[7px] pt-[4px] pl-[3px]">
          <input type="text" aria-label="Filter" className={`h-[19px] w-[120px] ${FIELD}`} />
          <input type="text" aria-label="Selection name" defaultValue="Spot" className={`h-[19px] rounded-l-[7px] px-[3px] ${FIELD}`} />
          <input type="text" aria-label="Sub-selection" className={`h-[19px] w-[115px] px-[3px] ${FIELD} ${PILL}`} />
        </div>
        <div className="grid grid-cols-2 gap-x-[3px] pt-[8px] pr-[5px] pb-[6px] pl-[2px]">
          <PanelButton corner className="h-[25px]">Selection</PanelButton>
          <PanelButton className="h-[25px]">Clusters</PanelButton>
        </div>
        <PanelHeader>Transform</PanelHeader>
        <div className="flex pt-[4px] pl-[3px]">
          <div className="z-10 flex w-[76px] flex-col gap-[14px] pt-[8px]">
            {transformValues.map((axis, i) => (
              <div key={i} className="flex flex-col gap-[5px]">
                {axis.map((v, j) => (
                  <input key={j} type="text" aria-label={`${'srt'[i]}${'xyz'[j]}`} defaultValue={v} className={`h-[19px] w-[76px] px-[2px] ${FIELD} ${PILL}`} />
                ))}
              </div>
            ))}
          </div>
          <div className="-ml-[6px] flex w-[28px] flex-col gap-[5px]">
            {[0, 1, 2].map((i) => (
              <div key={i} className="flex flex-col">
                {['x', 'y', 'z'].map((a) => (
                  <PanelButton key={a} className="h-[22px] pl-[2px] text-left leading-[14px]">{a}</PanelButton>
                ))}
              </div>
            ))}
          </div>
          <div className="flex flex-1 flex-col items-center">
            {['s', 'r', 't'].map((m) => (
              <div key={m} className="flex h-[71px] flex-col items-center">
                <button className='h-[25px] w-[25px] rounded-full border border-t-[#c6c3c1] border-l-[#aba7a5] border-r-[#7a7675] border-b-[#6e6a69] font-["Roboto",sans-serif] text-[18px] leading-[20px] font-bold text-[#333]'>
                  {m}
                </button>
                <svg viewBox="0 0 14 19" className="mt-[19px] h-[19px] w-[14px] fill-none stroke-[#333]">
                  <rect x="1" y="1" width="12" height="17" rx="3" />
                  <path d="M4 4h6v3H4zM4 8.500h6v3H4zM4 13h6v3H4z" fill="#333" />
                </svg>
              </div>
            ))}
          </div>
        </div>
        <div className="-mt-[23px] flex justify-end pr-[4px]">
          <PanelButton lit className="h-[25px] w-[40px]">View</PanelButton>
        </div>
        <div className="grid grid-cols-3 gap-x-[2px] gap-y-[7px] pt-[3px] pr-[4px] pb-[8px] pl-[2px]">
          <PanelButton dim className="h-[26px]">Par</PanelButton>
          <PanelButton dim corner className="h-[26px]">Ref</PanelButton>
          <PanelButton corner className="h-[26px]">Plane</PanelButton>
          <PanelButton dim className="h-[26px]">COG</PanelButton>
          <PanelButton corner className="h-[26px]">Prop</PanelButton>
          <PanelButton corner className="h-[26px]">Sym</PanelButton>
        </div>
        <PanelHeader>Snap</PanelHeader>
        <div className="grid grid-cols-5 gap-x-[3px] pt-[5px] pr-[4px] pb-[5px] pl-[3px]">
          <button className={`h-[21px] text-[12px] ${BEVEL}`}>ON</button>
          <PanelButton corner className="flex h-[21px] items-center justify-center">
            <span className="h-[6px] w-[6px] rounded-full bg-black" />
          </PanelButton>
          <PanelButton corner lit className="flex h-[21px] items-center justify-center">
            <svg viewBox="0 0 12 14" className="h-[14px] w-[12px] fill-none stroke-black" strokeWidth="1.300">
              <path d="M3 4c0-4 7-4 7-1 0 5-8 3-8 8 0 3 6 3 7 0" />
            </svg>
          </PanelButton>
          <PanelButton corner className="flex h-[21px] items-center justify-center">
            <span className="h-[11px] w-[11px] rounded-full border border-black bg-[#d0cecd]" />
          </PanelButton>
          <PanelButton className="flex h-[21px] items-center justify-center">
            <svg viewBox="0 0 14 14" className="h-[14px] w-[14px] stroke-[#222]">
              <path d="M3 0v14M7 0v14M11 0v14M0 3h14M0 7h14M0 11h14" strokeDasharray="1.500 .7" />
            </svg>
          </PanelButton>
        </div>
        <PanelHeader>Constrain</PanelHeader>
        <div className="grid grid-cols-2 gap-x-[2px] gap-y-[4px] pt-[6px] pr-[2px] pb-[7px] pl-[2px]">
          <PanelButton className="h-[26px]">Parent</PanelButton>
          <PanelButton className="h-[26px]">Cut</PanelButton>
          <PanelButton className="h-[26px]">CnsComp</PanelButton>
          <PanelButton className="h-[26px]">ChldComp</PanelButton>
        </div>
        <PanelHeader>Edit</PanelHeader>
        <div className="flex pt-[6px] pl-[2px]">
          <div className="grid grid-cols-[62px_47px] gap-x-px gap-y-[4px]">
            <PanelButton className="h-[26px]">Freeze</PanelButton>
            <PanelButton className="h-[26px]">Group</PanelButton>
            <PanelButton className="h-[26px]">Freeze M</PanelButton>
            <PanelButton className="h-[26px]">Immed</PanelButton>
          </div>
          <div className="flex flex-1 flex-col items-center gap-[3px] text-[#858180]">
            <button className="h-[12px] w-[12px] rounded-full border-r border-b border-[#8a8685] leading-[10px]">+</button>
            <button className="h-[12px] w-[12px] rounded-full border-r border-b border-[#8a8685] leading-[10px]">−</button>
          </div>
        </div>
      </div>
      <div className="flex-1" />
      <div className="mb-[2px] ml-[2px] grid h-[22px] grid-cols-3 gap-[2px] font-bold">
        <button className="rounded-b-lg border-r border-b border-l border-[#7a7675]">MCP</button>
        <button className="rounded-b-lg border border-[#7a7675] bg-[#9f9b9a] text-[#333]">KP/L</button>
        <button className="rounded-b-lg border border-[#7a7675] bg-[#9f9b9a] text-[#333]">PPG</button>
      </div>
    </aside>
  );
}

/* ---------- bottom ---------- */

const layoutIcons = [
  <path key="a" d="M0 0h4v18H0z" fill="#3c3a3a" />,
  <path key="b" d="M0 0h18v4H0z" fill="#3c3a3a" />,
  <path key="c" d="M0 14h18v4H0z" fill="#3c3a3a" />,
  <path key="d" d="M14 0h4v18h-4z" fill="#3c3a3a" />,
  <g key="e">
    <path d="M0 0h18v18H0z" fill="#595757" />
    <path d="M9 0v18M0 9h18" stroke="#b5b1af" />
  </g>,
  <g key="f">
    <path d="M0 0h9v18H0z" fill="#c9c7c6" />
    <path d="M9.500 0H18v18H9.500z" fill="#595757" />
    <path d="M9 9h9M9.500 0v18" stroke="#b5b1af" />
  </g>,
  <g key="g">
    <path d="M0 0h18v18H0z" fill="#c9c7c6" />
    <path d="M10 0h8v9h-8z" fill="#595757" />
    <path d="M3 12h4M3 16h4M7 12l4 2-4 2M14 11v6" stroke="#333" fill="none" />
  </g>,
];

const transport = [
  { label: 'First frame', d: 'M1.500 2.500v17M15 3v5l-3 3 3 3v5l-9-8zM20 3v5l-3 3 3 3v5' },
  { label: 'Play backwards', d: 'M17 2v5.500L11 11l6 3.500V20L5 12.500v-3z' },
  { label: 'Stop', d: 'M5 3h12v16H5z' },
  { label: 'Play', d: 'M5 2v5.500L11 11l-6 3.500V20l12-7.500v-3z' },
  { label: 'Last frame', d: 'M20.500 2.500v17M7 3v5l3 3-3 3v5l9-8zM2 3v5l3 3-3 3v5' },
];

function CommandRow() {
  return (
    <div className="flex h-[46px] items-start pl-[3px]">
      <div className="flex gap-[2px] pt-px">
        {layoutIcons.map((icon, i) => (
          <IconButton key={i} label={`Layout ${i + 1}`} className="h-[30px] w-[29px]">
            <svg viewBox="0 0 18 18" className="h-[20px] w-[20px]">
              <path d="M0 0h18v18H0z" fill="#8a8786" />
              {icon}
            </svg>
          </IconButton>
        ))}
      </div>
      <div className="mt-[2px] ml-[8px] flex h-[17px] min-w-0 flex-1 items-center rounded-[8px] border border-black bg-[#363233] pl-[2px]">
        <span className='bg-[#0b246a] font-["Liberation_Sans",sans-serif] text-[12px] leading-[15px] whitespace-pre text-white'>SelectObj "Spot", , True</span>
        <span className="flex-1" />
        <button aria-label="Command history" className="mr-px flex h-[14px] w-[14px] items-center justify-center rounded-full bg-[#c4c1bf]">
          <Triangle />
        </button>
      </div>
      <IconButton label="Script editor" className="ml-[4px] h-[30px] w-[30px]">
        <svg viewBox="0 0 22 22" className="h-[21px] w-[21px] fill-[#c4c2c1] stroke-[#333]" strokeWidth="1.500">
          <path d="M7 2c2-2 4 1 6 1l4 1c2 1 3 3 1 4l-3 3 1 6c0 3-2 4-4 3l-7-2c-2-1-1-3 0-4l3-4-4-2 5-4z" />
          <path d="M7 2l2 3 6 1M16 17c-1 2-4 1-5-1" fill="none" />
        </svg>
      </IconButton>
      <IconButton label="Toolbox" className="ml-[2px] h-[30px] w-[30px]">
        <svg viewBox="0 0 20 20" className="h-[19px] w-[19px] fill-[#c4c2c1] stroke-[#333]" strokeWidth="1.500">
          <path d="M6 6V2h8v4" fill="none" />
          <path d="M1 6h18v12H1zM10 9v6M7 12h6" />
        </svg>
      </IconButton>
      <button className="relative mt-px ml-[3px] h-[21px] w-[60px] rounded-sm border border-[#555] bg-[#979392] pt-[2px] text-[12px] leading-[17px] font-bold text-[#333]">
        <Triangle dir="up" className="absolute top-px left-[3px] h-[4px]" />
        Playback
      </button>
      <IconButton label="Previous frame" className="mt-[3px] ml-[3px] h-[24px] w-[22px]">
        <span className="flex h-[15px] w-[14px] items-center justify-center rounded-[3px] border-2 border-[#333]">
          <Triangle dir="left" />
        </span>
      </IconButton>
      <IconButton label="Next frame" className="mt-[3px] ml-[2px] h-[24px] w-[22px]">
        <span className="flex h-[15px] w-[14px] items-center justify-center rounded-[3px] border-2 border-[#333]">
          <Triangle dir="right" />
        </span>
      </IconButton>
      <div className="mt-[4px] ml-[3px] flex gap-[3px]">
        {transport.map((t) => (
          <IconButton key={t.label} label={t.label} className="h-[29px] w-[31px]">
            <svg viewBox="0 0 22 22" className="h-[22px] w-[22px] fill-[#cfcdcc] stroke-[#3a3838]" strokeWidth="2.600" strokeLinejoin="round">
              <path d={t.d} />
            </svg>
          </IconButton>
        ))}
        <IconButton label="Loop" className="h-[29px] w-[30px]">
          <svg viewBox="0 0 20 20" className="h-[20px] w-[20px]">
            <path d="M14 5c5 4 2 12-4 12S1 13 3 9" fill="none" stroke="#3a3838" strokeWidth="3" />
            <path d="M14 1v8L7 6z" fill="#3a3838" />
          </svg>
        </IconButton>
        <IconButton label="Audio" className="h-[29px] w-[30px]">
          <svg viewBox="0 0 20 22" className="h-[22px] w-[20px]">
            <path d="M3 14C0 0 18-1 18 12" fill="none" stroke="#3a3838" strokeWidth="2.500" />
            <path d="M6 13C5 4 14 4 15 11" fill="none" stroke="#3a3838" />
            <ellipse cx="6" cy="15" rx="3.500" ry="5" fill="#8a8786" stroke="#333" strokeWidth="1.500" transform="rotate(-15 6 15)" />
            <ellipse cx="14.500" cy="15" rx="3.500" ry="5" fill="#c4c1bf" stroke="#333" strokeWidth="1.500" transform="rotate(15 14.500 15)" />
          </svg>
        </IconButton>
      </div>
      <input type="text" aria-label="Playback rate" defaultValue="1000" className={`mt-[9px] ml-[4px] h-[19px] w-[42px] px-[3px] ${FIELD} ${PILL}`} />
      <span className={`mt-[8px] ml-[5px] h-[24px] w-[13px] pl-[6px] leading-[22px] italic ${BEVEL}`}>A</span>
      <input type="text" aria-label="Step" defaultValue="1" className={`mt-[10px] h-[19px] w-[25px] rounded-l-[7px] px-[3px] ${FIELD}`} />
      <div className="w-[72px]">
        <button className="relative mt-px block h-[21px] w-[71px] rounded-sm border border-[#555] bg-[#979392] pt-[2px] text-[12px] leading-[17px] font-bold text-[#333]">
          <Triangle dir="up" className="absolute top-px left-[3px] h-[4px]" />
          Animation
        </button>
        <div className="mt-[2px] flex gap-[3px]">
          <button className={`h-[20px] w-[35px] font-bold ${BEVEL}`}>Auto</button>
          <IconButton label="Previous key" className="h-[20px] w-[15px]">
            <Triangle dir="left" />
          </IconButton>
          <IconButton label="Next key" className="h-[20px] w-[15px]">
            <Triangle dir="right" />
          </IconButton>
        </div>
      </div>
      <IconButton label="Set key" className="mt-[8px] ml-[4px] h-[29px] w-[28px] rounded-lg border-[#8a8685]">
        <svg viewBox="0 0 20 20" className="h-[21px] w-[21px] fill-none stroke-[#858180]" strokeWidth="1.500">
          <circle cx="6.500" cy="6" r="5" />
          <circle cx="5.500" cy="5" r="1.500" />
          <path d="M9 11l2-2 8 9-3 1-2-2 1-1-3-3-1 1z" />
        </svg>
      </IconButton>
      <div className="ml-[6px] w-[274px]">
        <div className="flex gap-[4px] pt-px">
          <PanelButton corner className="h-[20px] w-[153px] pr-[6px] leading-[16px]">Key Marked Parameters</PanelButton>
          <IconButton label="Key presets" className="h-[20px] w-[36px]">
            <svg viewBox="0 0 18 18" className="h-[17px] w-[17px]">
              <path d="M3 4a3 3 0 015 0v3l-1 2v8H5V9L3 7z" fill="#8c2d2d" />
              <path d="M10 4a3 3 0 015 0v4l-3 2v5h-2V9z" fill="#2f7a4e" />
              <path d="M13 0h4v4z" fill="#222" />
            </svg>
          </IconButton>
        </div>
        <div className="flex items-center gap-[5px] pt-[4px]">
          <div className={`flex h-[20px] w-[223px] items-center pl-[4px] ${BEVEL}`}>
            <input type="text" aria-label="Marked parameters" className="h-[15px] w-[198px] bg-[#363233] text-white outline-none" />
            <Triangle dir="up" className="ml-[6px]" />
          </div>
          <IconButton label="Clear marks" className="h-[20px] w-[19px]">
            <CBadge />
          </IconButton>
          <IconButton label="Lock marks" className="h-[20px] w-[19px]">
            <Padlock />
          </IconButton>
        </div>
      </div>
    </div>
  );
}

const mouseHints = [
  { key: 'L', text: 'Select NODE' },
  { key: 'M', text: 'Select BRANCH' },
  { key: 'R', text: 'Select TREE/CHAIN' },
];

function StatusBar() {
  return (
    <footer className="flex h-[21px] border-t-2 border-b border-t-[#bdbab8] border-b-[#d6d0c4] leading-[17px]">
      <p className="flex-1 pl-[10px]">Select Objects</p>
      <div className="flex w-[882px]">
        {mouseHints.map((h) => (
          <p key={h.key} className="flex w-[238px] whitespace-nowrap">
            <span className="mr-[3px] w-[24px] rounded-t-lg border-t border-r border-l border-[#8a8685] border-r-[#c4c1bf] pl-[6px] text-[12px] leading-[17px] font-bold text-[#666]">{h.key}</span>
            {h.text}
          </p>
        ))}
      </div>
    </footer>
  );
}

export default function App() {
  return (
    <div className='flex min-h-screen flex-col bg-[#aba7a5] font-["Noto_Sans",sans-serif] text-[11px] text-[#111]'>
      <MenuBar />
      <main className="flex min-h-0 flex-1">
        <LeftBar />
        <div className="flex min-w-0 flex-1 flex-col">
          <Shelf />
          <Viewport />
          <Timeline />
        </div>
        <CommandPanel />
      </main>
      <CommandRow />
      <StatusBar />
    </div>
  );
}
